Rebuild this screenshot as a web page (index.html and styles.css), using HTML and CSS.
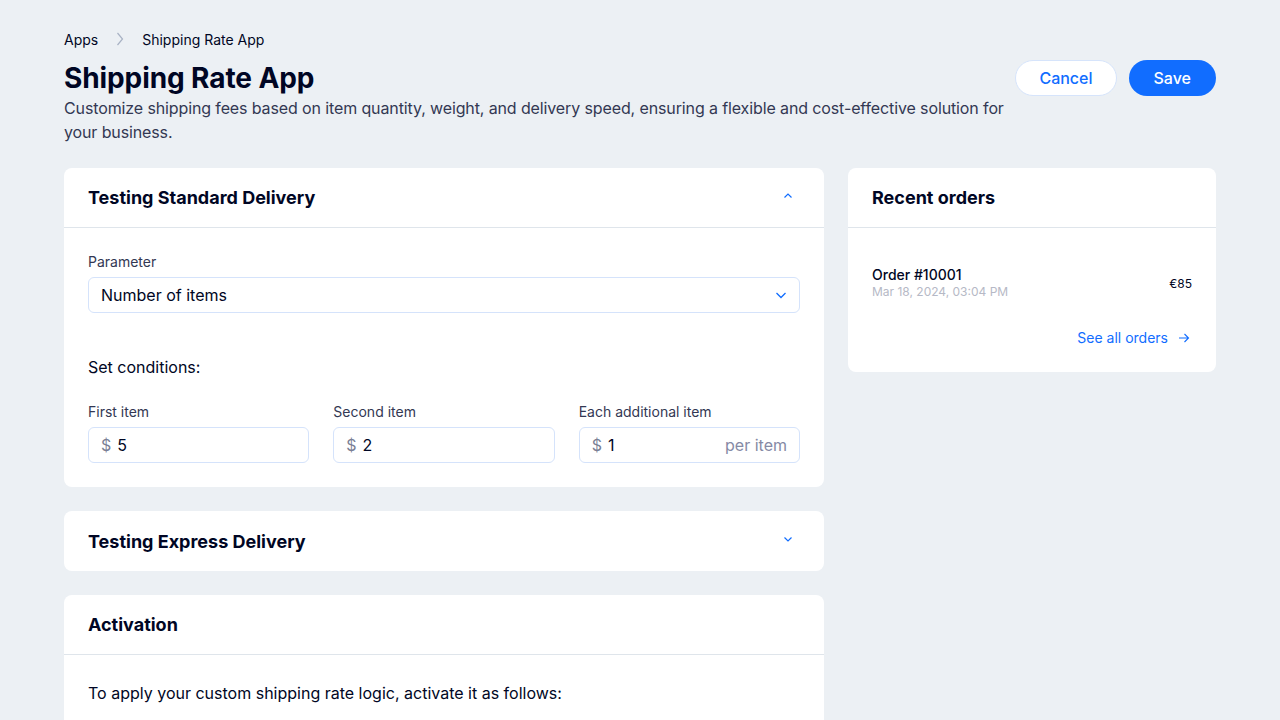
FILE: index.html
```html
<!DOCTYPE html>
<html lang="en">
<head>
<meta charset="utf-8">
<title>Shipping Rate App</title>
<link rel="stylesheet" href="styles.css">
</head>
<body>
<div class="page">
  <nav class="breadcrumbs">
    <span class="crumb">Apps</span>
    <svg class="crumb-sep" width="8" height="14" viewBox="0 0 8 14"><path d="M1.5 1 L6.5 7 L1.5 13" fill="none" stroke="#a8b2c4" stroke-width="1.2"/></svg>
    <span class="crumb">Shipping Rate App</span>
  </nav>
  <header class="page-header">
    <div class="header-text">
      <h1 class="title">Shipping Rate App</h1>
      <p class="subtitle">Customize shipping fees based on item quantity, weight, and delivery speed, ensuring a flexible and cost-effective solution for your business.</p>
    </div>
    <div class="header-actions">
      <button class="btn btn-secondary">Cancel</button>
      <button class="btn btn-primary">Save</button>
    </div>
  </header>

  <div class="layout">
    <div class="main-col">
      <section class="card">
        <div class="card-header">
          <h2 class="card-title">Testing Standard Delivery</h2>
          <svg class="chev" width="12" height="8" viewBox="0 0 12 8"><path d="M2.5 5.5 L6 2 L9.5 5.5" fill="none" stroke="#116dff" stroke-width="1.2"/></svg>
        </div>
        <div class="card-body">
          <div class="field">
            <label class="field-label">Parameter</label>
            <div class="input select">
              <span class="input-value">Number of items</span>
              <svg width="12" height="8" viewBox="0 0 12 8"><path d="M1.5 2 L6 6.5 L10.5 2" fill="none" stroke="#116dff" stroke-width="1.3"/></svg>
            </div>
          </div>
          <p class="section-text">Set conditions:</p>
          <div class="conditions">
            <div class="field">
              <label class="field-label">First item</label>
              <div class="input"><span class="prefix">$</span><span class="input-value">5</span></div>
            </div>
            <div class="field">
              <label class="field-label">Second item</label>
              <div class="input"><span class="prefix">$</span><span class="input-value">2</span></div>
            </div>
            <div class="field">
              <label class="field-label">Each additional item</label>
              <div class="input"><span class="prefix">$</span><span class="input-value grow">1</span><span class="suffix">per item</span></div>
            </div>
          </div>
        </div>
      </section>

      <section class="card">
        <div class="card-header no-border">
          <h2 class="card-title">Testing Express Delivery</h2>
          <svg class="chev" width="12" height="8" viewBox="0 0 12 8"><path d="M2.5 2.5 L6 6 L9.5 2.5" fill="none" stroke="#116dff" stroke-width="1.2"/></svg>
        </div>
      </section>

      <section class="card">
        <div class="card-header">
          <h2 class="card-title">Activation</h2>
        </div>
        <div class="card-body">
          <p class="body-text">To apply your custom shipping rate logic, activate it as follows:</p>
        </div>
      </section>
    </div>

    <aside class="side-col">
      <section class="card">
        <div class="card-header">
          <h2 class="card-title">Recent orders</h2>
        </div>
        <div class="orders-body">
          <div class="order-row">
            <div class="order-info">
              <span class="order-name">Order #10001</span>
              <span class="order-date">Mar 18, 2024, 03:04 PM</span>
            </div>
            <span class="order-price">€85</span>
          </div>
          <div class="orders-footer">
            <a class="link">See all orders
              <svg width="12" height="10" viewBox="0 0 12 10"><path d="M1 5 H10.5 M6.5 1 L10.5 5 L6.5 9" fill="none" stroke="#116dff" stroke-width="1.1"/></svg>
            </a>
          </div>
        </div>
      </section>
    </aside>
  </div>
</div>
</body>
</html>
```

FILE: styles.css
```css
* { box-sizing: border-box; }
html, body { margin: 0; padding: 0; }
body {
  background: #ecf0f4;
  font-family: "Inter", "Open Sans", sans-serif;
  color: #000624;
  height: 720px;
  overflow: hidden;
}
.page { padding: 30px 64px 0; }

.breadcrumbs {
  display: flex;
  align-items: center;
  gap: 16px;
  height: 18px;
  font-size: 14px;
  color: #000624;
}
.crumb-sep { margin: 0 2px 0 2px; }

.page-header {
  display: flex;
  justify-content: space-between;
  align-items: flex-start;
  margin-top: 12px;
}
.header-text { width: 950px; }
.title {
  margin: 0;
  font-size: 28px;
  line-height: 36px;
  font-weight: 700;
  letter-spacing: -0.1px;
  color: #000624;
}
.subtitle {
  margin: 0;
  font-size: 16px;
  line-height: 24px;
  letter-spacing: -0.12px;
  color: #333853;
}
.header-actions { display: flex; gap: 12px; }
.btn {
  height: 36px;
  border-radius: 18px;
  font-family: inherit;
  font-size: 16px;
  font-weight: 500;
  padding: 0 23px;
  border: 1px solid transparent;
}
.btn-secondary { background: #fff; color: #116dff; border-color: #d6e4fb; }
.btn-primary { background: #116dff; color: #fff; padding: 0 24px; }

.layout {
  display: grid;
  grid-template-columns: 760px 368px;
  gap: 24px;
  margin-top: 24px;
}
.main-col, .side-col { display: flex; flex-direction: column; gap: 24px; }
.side-col { align-self: start; }

.card { background: #fff; border-radius: 8px; }
.card-header {
  height: 60px;
  display: flex;
  align-items: center;
  justify-content: space-between;
  padding: 0 24px;
  border-bottom: 1px solid #dfe5eb;
}
.card-header.no-border { border-bottom: none; }
.card-title { margin: 0; font-size: 18px; font-weight: 700; color: #000624; }
.chev { margin-right: 6px; margin-top: -4px; }

.card-body { padding: 25px 24px 24px; }
.field { display: flex; flex-direction: column; }
.field-label { font-size: 14px; line-height: 18px; color: #333853; margin-bottom: 6px; }
.input {
  height: 36px;
  border: 1px solid #d5e3fb;
  border-radius: 6px;
  display: flex;
  align-items: center;
  padding: 0 12px;
  font-size: 16px;
  color: #000624;
}
.select { justify-content: space-between; }
.select .input-value { flex: 1; }
.prefix { color: #7a7f95; margin-right: 6px; }
.grow { flex: 1; }
.suffix { color: #868aa5; }
.section-text { margin: 42px 0 0; font-size: 16px; line-height: 24px; }
.conditions {
  display: grid;
  grid-template-columns: 1fr 1fr 1fr;
  gap: 24px;
  margin-top: 24px;
}
.body-text { margin: 1px 0 0; font-size: 16px; line-height: 24px; }

.orders-body { padding: 38px 24px 26px; }
.order-row { display: flex; justify-content: space-between; align-items: center; }
.order-info { display: flex; flex-direction: column; }
.order-name { font-size: 14px; font-weight: 500; line-height: 18px; }
.order-date { font-size: 12px; color: #b6b9c6; line-height: 16px; }
.order-price { font-size: 12px; }
.orders-footer { display: flex; justify-content: flex-end; margin-top: 29px; }
.link {
  display: flex;
  align-items: center;
  gap: 10px;
  color: #116dff;
  font-size: 14px;
  margin-right: 2px;
}
```
